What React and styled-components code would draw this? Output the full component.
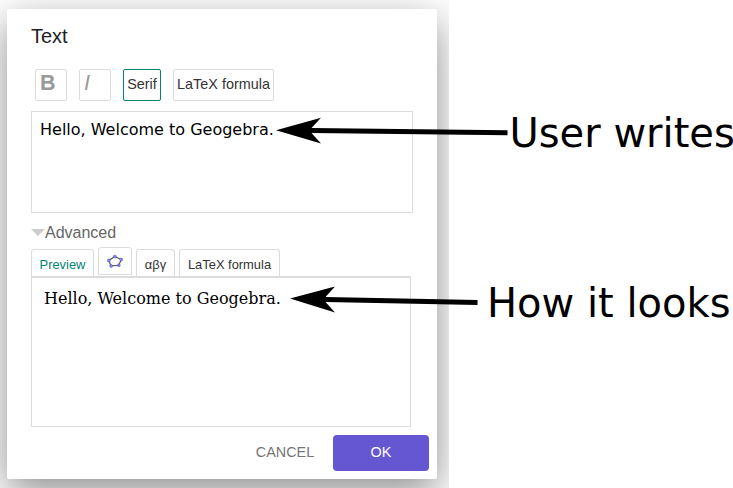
import React from 'react';
import styled, { createGlobalStyle } from 'styled-components';

const Global = createGlobalStyle`
  * { box-sizing: border-box; }
  body { margin: 0; background: #fff; font-family: "Liberation Sans", Arial, sans-serif; overflow: hidden; }
  button, textarea { font-family: inherit; }
`;

const Page = styled.main`
  position: relative;
  width: 733px;
  height: 488px;
  overflow: hidden;
`;

const Backdrop = styled.div`
  width: 449px;
  height: 488px;
  padding: 9px 12px 9px 7px;
  overflow: hidden;
`;

const Dialog = styled.section`
  display: flex;
  flex-direction: column;
  width: 430px;
  height: 470px;
  padding: 0 8px 8px 24px;
  background: #fff;
  border-radius: 2px;
  box-shadow: 0 13px 40px rgba(0, 0, 0, 0.45);
`;

const Title = styled.h1`
  margin: 0;
  height: 60px;
  padding-top: 15px;
  font-size: 20px;
  font-weight: 400;
  line-height: 24px;
  color: #222;
`;

const Toolbar = styled.div`
  display: flex;
  gap: 12px;
  padding-left: 4px;
  height: 42px;
`;

const FormatButton = styled.button`
  width: ${(p) => p.$width}px;
  height: 32px;
  padding: 0 0 2px;
  border: 1px solid ${(p) => (p.$active ? '#008475' : '#dcdcdc')};
  border-radius: 2px;
  background: #fff;
  color: #333;
  font-size: 14.4px;
  white-space: nowrap;
`;

const GlyphButton = styled(FormatButton)`
  padding: 0 0 4px 4px;
  text-align: left;
  color: #999;
  font-size: 21.5px;
  line-height: 24px;
  font-weight: ${(p) => (p.$italic ? 400 : 700)};
  font-style: ${(p) => (p.$italic ? 'italic' : 'normal')};
`;

const Editor = styled.textarea`
  display: block;
  width: 382px;
  height: 102px;
  padding: 8px;
  border: 1px solid #dcdcdc;
  resize: none;
  outline: none;
  color: #000;
  font: 16px/20px "DejaVu Sans", sans-serif;
`;

const Advanced = styled.div`
  display: flex;
  align-items: center;
  height: 34px;
  padding-top: 5px;
  color: #666;
  font-size: 16px;
`;

const Caret = styled.span`
  border: 7px solid transparent;
  border-top-color: #ccc;
  border-bottom: 0;
`;

const Tabs = styled.div`
  display: flex;
  gap: 4px;
  height: 29px;
`;

const Tab = styled.button`
  width: ${(p) => p.$width}px;
  height: ${(p) => (p.$active ? 28 : 27)}px;
  margin-top: 2px;
  padding: ${(p) => (p.$active ? 2 : 3)}px 0 0;
  border: 1px solid #dcdcdc;
  border-bottom: 0;
  border-radius: 3px 3px 0 0;
  background: #fff;
  color: ${(p) => (p.$active ? '#008475' : '#333')};
  font-size: 12.9px;
  line-height: 16px;
  white-space: nowrap;
`;

const IconTab = styled(Tab)`
  display: grid;
  place-items: center;
  height: 28px;
  margin-top: 0;
  padding: 0;
  border-bottom: 1px solid #dcdcdc;
`;

const Preview = styled.div`
  width: 380px;
  height: 151px;
  padding: 11px 12px;
  border: 1px solid #dcdcdc;
  border-top-width: 2px;
  font: 16px/20px "DejaVu Serif", serif;
  color: #000;
`;

const Footer = styled.footer`
  display: flex;
  justify-content: flex-end;
  margin-top: 8px;
`;

const ActionButton = styled.button`
  width: 96px;
  height: 36px;
  padding: 0 0 2px;
  border: 0;
  border-radius: 4px;
  background: ${(p) => (p.$primary ? '#6557d2' : 'transparent')};
  color: ${(p) => (p.$primary ? '#fff' : '#757575')};
  font-size: 14.4px;
`;

const Arrows = styled.svg`
  position: absolute;
  left: 0;
  top: 0;
`;

const Note = styled.p`
  position: absolute;
  left: ${(p) => p.$x}px;
  top: ${(p) => p.$y}px;
  margin: 0;
  white-space: nowrap;
  color: #000;
  font: 40px/48px "DejaVu Sans", sans-serif;
`;

const PENTAGON = [[7.9, 3.5], [14.2, 6.5], [11.8, 12.3], [4.1, 12.9], [1.8, 7.4]];

function PolygonIcon() {
  return (
    <svg width="16" height="16" viewBox="0 0 16 16">
      <polygon points={PENTAGON.map((p) => p.join()).join(' ')} fill="none" stroke="#555" strokeWidth="1.2" />
      {PENTAGON.map(([x, y]) => (
        <circle key={x} cx={x} cy={y} r="1.5" fill="#8080ff" stroke="#60608c" strokeWidth=".5" />
      ))}
    </svg>
  );
}

export default function App() {
  return (
    <Page>
      <Global />
      <Backdrop>
        <Dialog>
          <Title>Text</Title>
          <Toolbar>
            <GlyphButton $width={32}>B</GlyphButton>
            <GlyphButton $width={32} $italic>I</GlyphButton>
            <FormatButton $width={38} $active>Serif</FormatButton>
            <FormatButton $width={101}>LaTeX formula</FormatButton>
          </Toolbar>
          <Editor readOnly spellCheck={false} value="Hello, Welcome to Geogebra." />
          <Advanced><Caret />Advanced</Advanced>
          <Tabs>
            <Tab $width={63} $active>Preview</Tab>
            <IconTab $width={34}><PolygonIcon /></IconTab>
            <Tab $width={39}>αβγ</Tab>
            <Tab $width={101}>LaTeX formula</Tab>
          </Tabs>
          <Preview>Hello, Welcome to Geogebra.</Preview>
          <Footer>
            <ActionButton>CANCEL</ActionButton>
            <ActionButton $primary>OK</ActionButton>
          </Footer>
        </Dialog>
      </Backdrop>
      <Arrows width="733" height="488">
        <path d="M276 130.3 L321 117.8 L311.5 127.9 L507.5 130.2 V135.2 L311.5 132.9 L321 143.5 Z" />
        <path d="M290 298.6 L335 286.5 L325.5 296.9 L477.5 300 V305 L325.5 301.9 L335 312.4 Z" />
      </Arrows>
      <Note $x={509.5} $y={109}>User writes</Note>
      <Note $x={487} $y={279}>How it looks</Note>
    </Page>
  );
}
